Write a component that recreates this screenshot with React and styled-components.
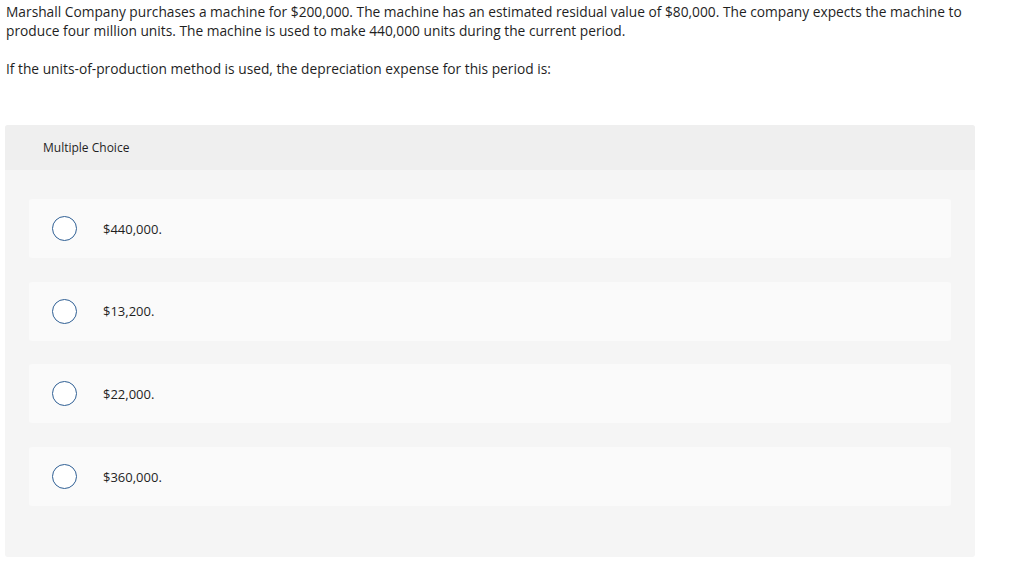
import React from 'react';
import styled, { createGlobalStyle } from 'styled-components';

const GlobalStyle = createGlobalStyle`
  body {
    margin: 0;
    background: #ffffff;
    font-family: "Open Sans", Lato, sans-serif;
    color: #1f1f1f;
  }
`;

const Page = styled.div`
  padding: 2px 49px 0 6px;
`;

const Prompt = styled.p`
  font-size: 13.75px;
  line-height: 19px;
  margin: 0 0 19px 0;
`;

const Panel = styled.section`
  margin: 47px 0 0 -1px;
  width: 970px;
  background: #f5f5f5;
  border-radius: 3px;
  padding-bottom: 51px;
`;

const PanelHeader = styled.div`
  height: 45px;
  background: #efefef;
  border-radius: 3px 3px 0 0;
  display: flex;
  align-items: center;
  padding-left: 38px;
  font-size: 12px;
`;

const Options = styled.div`
  display: flex;
  flex-direction: column;
  gap: 23.7px;
  padding: 29px 24px 0 24px;
`;

const Option = styled.label`
  display: flex;
  align-items: center;
  height: 59px;
  background: #fafafa;
  border-radius: 3px;
  padding-left: 23px;
  font-size: 13px;
  cursor: pointer;
`;

const Radio = styled.span`
  width: 23px;
  height: 23px;
  border: 1.3px solid #2f5f94;
  border-radius: 50%;
  background: #ffffff;
  margin-right: 26px;
  flex-shrink: 0;
`;

const choices = ['$440,000.', '$13,200.', '$22,000.', '$360,000.'];

export default function App() {
  return (
    <>
      <GlobalStyle />
      <Page>
        <Prompt>
          Marshall Company purchases a machine for $200,000. The machine has an estimated residual value of $80,000. The company expects the machine to produce four million units. The machine is used to make 440,000 units during the current period.
        </Prompt>
        <Prompt>
          If the units-of-production method is used, the depreciation expense for this period is:
        </Prompt>
        <Panel>
          <PanelHeader>Multiple Choice</PanelHeader>
          <Options>
            {choices.map((c) => (
              <Option key={c}>
                <Radio />
                {c}
              </Option>
            ))}
          </Options>
        </Panel>
      </Page>
    </>
  );
}
